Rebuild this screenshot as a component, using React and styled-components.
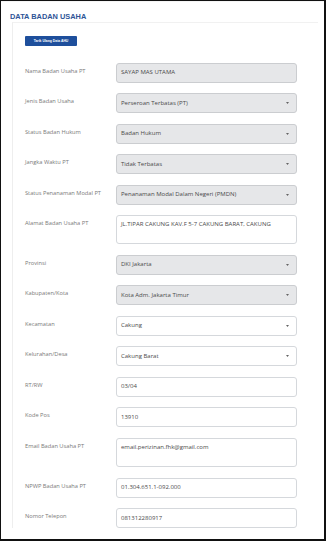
import React from 'react'
import styled, { createGlobalStyle } from 'styled-components'

const Global = createGlobalStyle`
    html, body {
        margin: 0;
        padding: 0;
        background: #fff;
    }
    * {
        box-sizing: border-box;
    }
`

const Frame = styled.div`
    width: 326px;
    height: 541px;
    overflow: hidden;
    background: #fff;
    border: 1px solid #111;
    border-right-width: 2px;
    border-bottom-width: 2px;
    font-family: "Open Sans", "Noto Sans", sans-serif;
`

const Header = styled.div`
    height: 21px;
    padding: 9px 0 0 9px;
    display: flex;
    align-items: center;
    border-top: 1px solid #f5f5f5;
`

const Title = styled.h1`
    margin: 0;
    font-family: "Liberation Sans", Arial, sans-serif;
    font-size: 7.4px;
    font-weight: 700;
    color: #2f5597;
`

const Card = styled.section`
    margin: 0 6px 0 11px;
    border-left: 1px solid #eeeeee;
    border-top: 1px solid #f1f1f1;
    padding: 13px 0 0 12px;
`

const PullButton = styled.button`
    display: block;
    width: 52px;
    height: 10px;
    padding: 0;
    border: none;
    border-radius: 1px;
    background: #1e4f9c;
    color: #fff;
    font-family: "Liberation Sans", Arial, sans-serif;
    font-size: 3.4px;
    font-weight: 700;
    line-height: 10px;
    text-align: center;
`

const Form = styled.div`
    margin-top: 16.5px;
    display: flex;
    flex-direction: column;
    gap: 10.5px;
`

const Row = styled.div`
    display: grid;
    grid-template-columns: 91px 181px;
    align-items: start;
`

const Label = styled.label`
    padding-top: 5px;
    font-size: 5.7px;
    line-height: 6px;
    color: #7a7a7a;
`

const Field = styled.div`
    position: relative;
    height: ${p => (p.tall ? p.tall : 20)}px;
    border: 1px solid ${p => (p.locked ? '#cbcdd0' : '#d5d8dc')};
    border-radius: 3px;
    background: ${p => (p.locked ? '#e6e7e9' : '#fff')};
    padding: ${p => (p.tall ? '5px' : '0')} 4px 0 4px;
    display: flex;
    align-items: ${p => (p.tall ? 'flex-start' : 'center')};
    font-size: 6px;
    line-height: 7px;
    color: #4a4a4a;
    white-space: nowrap;
    overflow: hidden;
`

const Caret = styled.svg`
    position: absolute;
    right: 7px;
    top: 50%;
    width: 3px;
    height: 2px;
    margin-top: -1px;
`

const rows = [
    { label: 'Nama Badan Usaha PT', value: 'SAYAP MAS UTAMA', locked: true },
    { label: 'Jenis Badan Usaha', value: 'Perseroan Terbatas (PT)', locked: true, select: true },
    { label: 'Status Badan Hukum', value: 'Badan Hukum', locked: true, select: true },
    { label: 'Jangka Waktu PT', value: 'Tidak Terbatas', locked: true, select: true },
    { label: 'Status Penanaman Modal PT', value: 'Penanaman Modal Dalam Negeri (PMDN)', locked: true, select: true },
    { label: 'Alamat Badan Usaha PT', value: 'JL.TIPAR CAKUNG KAV.F 5-7 CAKUNG BARAT, CAKUNG', tall: 29 },
    { label: 'Provinsi', value: 'DKI Jakarta', locked: true, select: true },
    { label: 'Kabupaten/Kota', value: 'Kota Adm. Jakarta Timur', locked: true, select: true },
    { label: 'Kecamatan', value: 'Cakung', select: true },
    { label: 'Kelurahan/Desa', value: 'Cakung Barat', select: true },
    { label: 'RT/RW', value: '03/04' },
    { label: 'Kode Pos', value: '13910' },
    { label: 'Email Badan Usaha PT', value: 'email.perizinan.fhk@gmail.com', tall: 29.5 },
    { label: 'NPWP Badan Usaha PT', value: '01.304.651.1-092.000' },
    { label: 'Nomor Telepon', value: '081312280917' },
]

const App = () => (
    <Frame>
        <Global />
        <Header>
            <Title>DATA BADAN USAHA</Title>
        </Header>
        <Card>
            <PullButton>Tarik Ulang Data AHU</PullButton>
            <Form>
                {rows.map(r => (
                    <Row key={r.label}>
                        <Label>{r.label}</Label>
                        <Field locked={r.locked} tall={r.tall}>
                            {r.value}
                            {r.select && (
                                <Caret viewBox="0 0 3 2">
                                    <path d="M0 0 L3 0 L1.5 2 Z" fill="#666" />
                                </Caret>
                            )}
                        </Field>
                    </Row>
                ))}
            </Form>
        </Card>
    </Frame>
)

export default App
